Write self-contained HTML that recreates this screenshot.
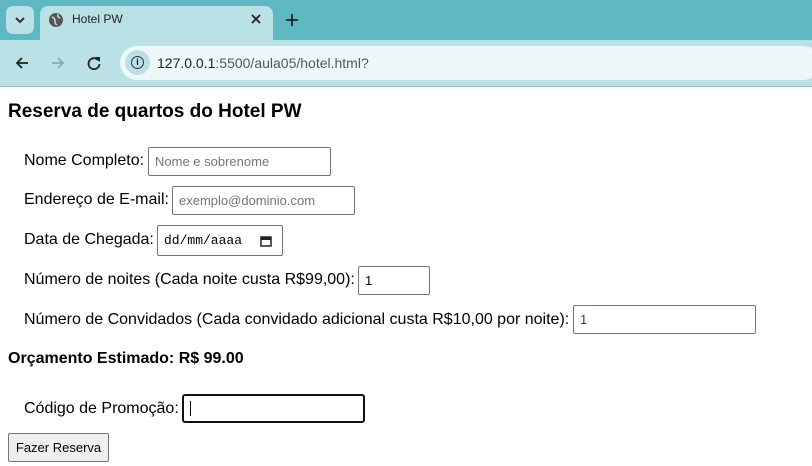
<!DOCTYPE html>
<html><head><style>
*{box-sizing:border-box}
body{margin:0;width:812px;height:466px;overflow:hidden;background:#fff;font-family:"Liberation Sans",Arial,sans-serif;position:relative}
.a{position:absolute;white-space:nowrap}
.lbl{font-size:16px;color:#000}
.inp{position:absolute;border:1px solid #767676;border-radius:2px;background:#fff;font-size:13px;padding:0 6px;display:flex;align-items:center}
.ph{color:#757575}
</style></head><body>
<div class="a" style="left:0;top:0;width:812px;height:40px;background:#5db8c2"></div>
<div class="a" style="left:6px;top:6px;width:28px;height:28px;background:#b9e1e6;border-radius:7px"></div>
<svg class="a" style="left:14px;top:16px" width="12" height="8"><path d="M2 2l4 4 4-4" stroke="#333" stroke-width="2" fill="none"/></svg>
<div class="a" style="left:40px;top:6px;width:233px;height:40px;background:#b9e1e6;border-radius:8px 8px 0 0"></div>
<svg class="a" style="left:48px;top:12px" width="16" height="16"><circle cx="8" cy="8" r="7" fill="#555"/><path d="M4 5q3 1 3 4t2 4M10 2q-1 3 2 4" stroke="#b9e1e6" stroke-width="1.5" fill="none"/></svg>
<div class="a" style="left:72px;top:12px;font-size:12px;color:#222">Hotel PW</div>
<svg class="a" style="left:251px;top:14px" width="10" height="10"><path d="M1 1l8 8M9 1l-8 8" stroke="#222" stroke-width="1.8"/></svg>
<svg class="a" style="left:286px;top:14px" width="12" height="12"><path d="M6 0v12M0 6h12" stroke="#222" stroke-width="1.8"/></svg>
<div class="a" style="left:0;top:40px;width:812px;height:46px;background:#b9e1e6"></div>
<div class="a" style="left:0;top:86px;width:812px;height:1px;background:#9bb"></div>
<svg class="a" style="left:15px;top:56px" width="14" height="14"><path d="M13 7H2M7 2L2 7l5 5" stroke="#222" stroke-width="1.8" fill="none"/></svg>
<svg class="a" style="left:51px;top:56px" width="14" height="14"><path d="M1 7h11M7 2l5 5-5 5" stroke="#8aa" stroke-width="1.8" fill="none"/></svg>
<svg class="a" style="left:87px;top:56px" width="14" height="14"><path d="M11.5 4.5A5.5 5.5 0 1 0 12.5 8" stroke="#222" stroke-width="1.8" fill="none"/><path d="M8 1h5v5z" fill="#222"/></svg>
<div class="a" style="left:120px;top:46px;width:700px;height:34px;background:#eef8f9;border-radius:17px"></div>
<div class="a" style="left:125px;top:50px;width:25px;height:25px;background:#b9e1e6;border-radius:50%"></div>
<div class="a" style="left:131px;top:56px;width:13px;height:13px;border:1.5px solid #333;border-radius:50%;font-size:9px;text-align:center;line-height:11px;font-weight:bold">i</div>
<div class="a" style="left:157px;top:55px;font-size:14px;color:#222">127.0.0.1<span style="color:#555">:5500/aula05/hotel.html?</span></div>

<div class="a" style="left:8px;top:101px;font-size:19px;font-weight:bold">Reserva de quartos do Hotel PW</div>
<div class="a lbl" style="left:24px;top:152px">Nome Completo:</div>
<div class="inp" style="left:148px;top:147px;width:183px;height:29px"><span class="ph">Nome e sobrenome</span></div>
<div class="a lbl" style="left:24px;top:191px">Endereço de E-mail:</div>
<div class="inp" style="left:172px;top:186px;width:183px;height:29px"><span class="ph">exemplo@dominio.com</span></div>
<div class="a lbl" style="left:24px;top:231px">Data de Chegada:</div>
<div class="inp" style="left:157px;top:225px;width:126px;height:31px;font-family:'Liberation Mono',monospace;font-size:13px">dd/mm/aaaa
<svg style="position:absolute;right:10px;top:9px" width="12" height="12"><rect x="1" y="2" width="10" height="9" fill="none" stroke="#222" stroke-width="1.5"/><rect x="1" y="2" width="10" height="3" fill="#222"/></svg></div>
<div class="a lbl" style="left:24px;top:271px">Número de noites (Cada noite custa R$99,00):</div>
<div class="inp" style="left:358px;top:266px;width:72px;height:29px">1</div>
<div class="a lbl" style="left:24px;top:311px">Número de Convidados (Cada convidado adicional custa R$10,00 por noite):</div>
<div class="inp" style="left:573px;top:305px;width:183px;height:29px;color:#1a3a8a">1</div>
<div class="a" style="left:8px;top:350px;font-size:16px;font-weight:bold">Orçamento Estimado: R$ 99.00</div>
<div class="a lbl" style="left:24px;top:400px">Código de Promoção:</div>
<div class="inp" style="left:182px;top:394px;width:183px;height:29px;border:2px solid #111;border-radius:3px"><span style="width:1px;height:15px;background:#000"></span></div>
<div class="a" style="left:8px;top:433px;width:101px;height:29px;background:#efefef;border:1px solid #767676;border-radius:2px;font-size:13px;text-align:center;line-height:27px">Fazer Reserva</div>
</body></html>
